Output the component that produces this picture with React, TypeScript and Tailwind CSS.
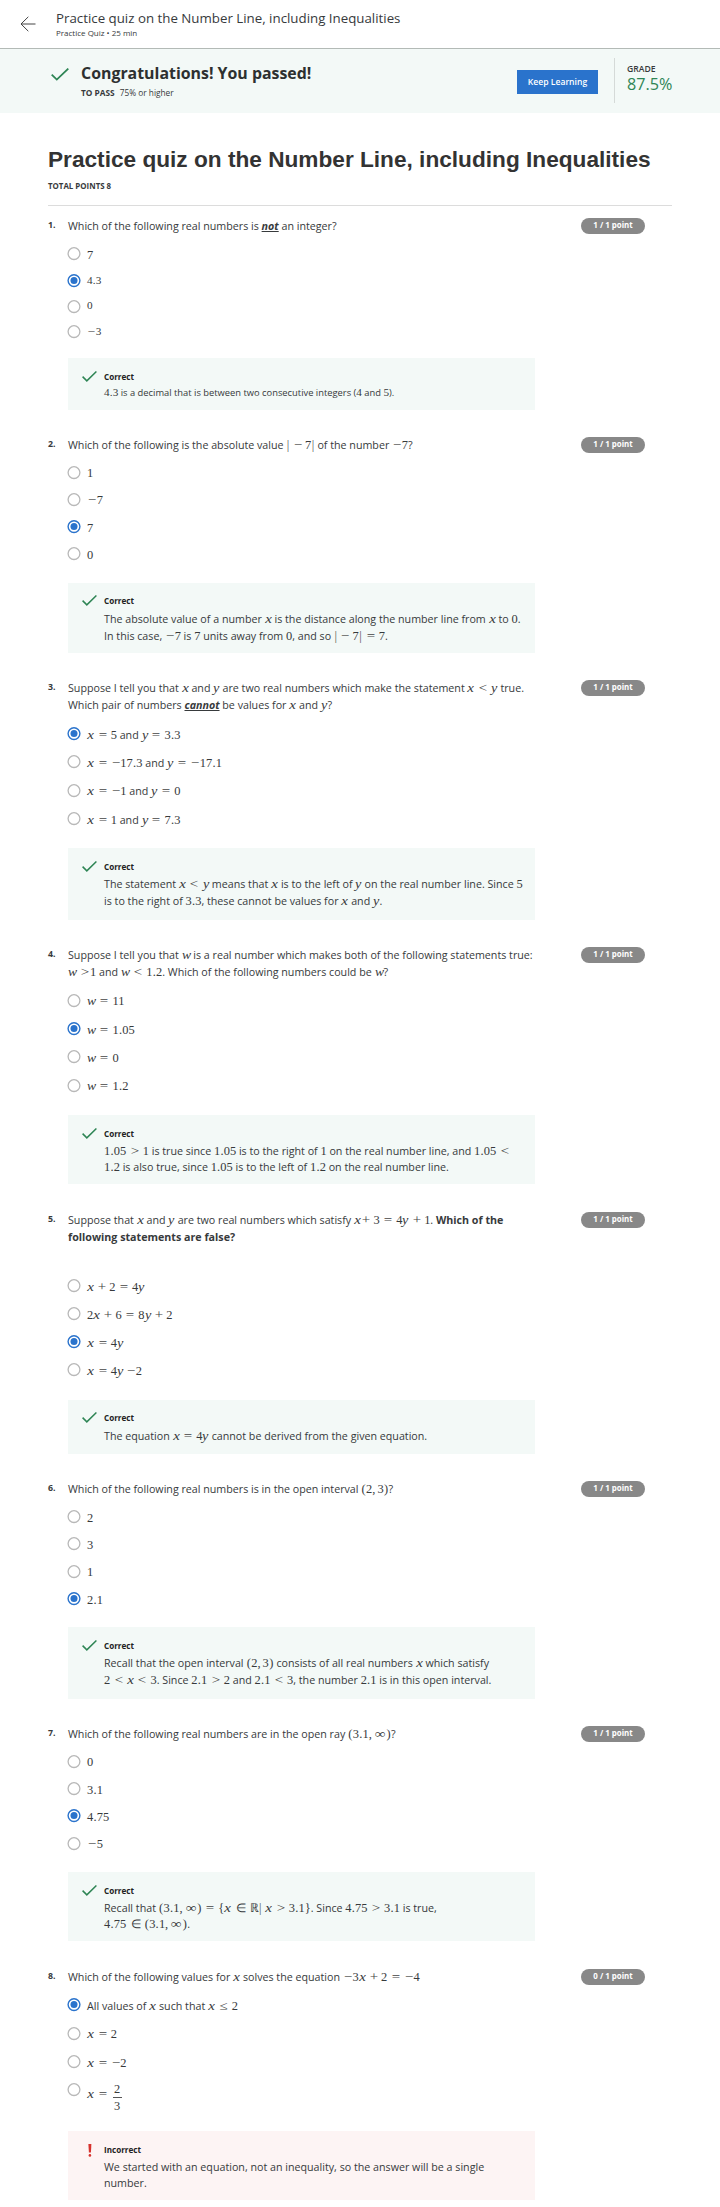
import React from "react";

/* Typesets a short formula: variables in italics, relations and signs on wider advances. */
function M({ children }: { children: string }) {
  const s = children;
  const out: React.ReactNode[] = [];
  for (let i = 0; i < s.length; i++) {
    const c = s[i];
    if (c === " ") continue;
    const post = s[i + 1] === " ";
    const unary = !post && "=<>".includes(s[i - 2] ?? " ");
    const pre = s[i - 1] === " " && !unary;
    if (c === "∈") {
      out.push(<span key={i} className="mx-[0.36em] inline-block w-[0.75em] text-center">∈</span>);
    } else if ("=<>≤+−".includes(c)) {
      const rel = !"+−".includes(c);
      const ml = pre ? (rel ? "ml-[0.278em]" : "ml-[0.222em]") : "";
      const mr = post ? (rel ? "mr-[0.278em]" : "mr-[0.222em]") : "";
      out.push(
        <span key={i} className={`inline-block w-[0.778em] scale-x-[1.2] text-center text-[#444] ${ml} ${mr}`}>{c}</span>
      );
    } else if (/[xyw]/.test(c)) {
      const w = c === "w" ? "w-[0.716em] scale-x-[1.1]" : c === "y" ? "w-[0.52em] scale-x-[1.15]" : "w-[0.572em] scale-x-[1.2]";
      out.push(<span key={i} className={`inline-block text-center italic ${w}`}>{c}</span>);
    } else if (c === "|") {
      const gap = i > 0 && post && s[i + 2] !== "=" ? "mr-[0.25em]" : "";
      out.push(<span key={i} className={`inline-block w-[0.278em] text-center text-[#555] ${gap}`}>|</span>);
    } else if (c === "∞") {
      out.push(<span key={i} className="inline-block w-[0.98em] scale-x-[1.2] text-center">∞</span>);
    } else if (c === "(" || c === ")") {
      out.push(<span key={i} className="inline-block w-[0.389em] text-center">{c}</span>);
    } else if (c === ",") {
      out.push(<span key={i} className="mr-[0.17em]">,</span>);
    } else {
      out.push(<span key={i} className={c === "." ? "inline-block w-[0.278em] text-center" : ""}>{c}</span>);
    }
  }
  return (
    <span className="inline-block whitespace-nowrap font-['Liberation_Serif',serif] text-[12.45px] leading-none">{out}</span>
  );
}

function Small({ children }: { children: React.ReactNode }) {
  return <span className="text-[9.35px] [&>span]:text-[11.2px]">{children}</span>;
}

function Check({ className }: { className: string }) {
  return (
    <svg viewBox="0 0 18 13" className={className} fill="none" stroke="#2e8555" strokeWidth="1.8" preserveAspectRatio="none">
      <path d="M0.7 6.6 L5.8 11.6 L17.3 0.6" />
    </svg>
  );
}

function Radio({ on }: { on: boolean }) {
  return on ? (
    <svg viewBox="0 0 14 14" className="-ml-[1px] size-[14px] shrink-0">
      <circle cx="7" cy="6.6" r="5.9" fill="#fff" stroke="#2a73cc" strokeWidth="1.4" />
      <circle cx="7" cy="6.6" r="3.5" fill="#2a73cc" />
    </svg>
  ) : (
    <svg viewBox="0 0 14 14" className="-ml-[1px] size-[14px] shrink-0">
      <circle cx="7" cy="6.6" r="5.9" fill="#fff" stroke="#b8b8b8" strokeWidth="1.3" />
    </svg>
  );
}

type Option = { h: number; base: number; body: React.ReactNode };
type Question = {
  height: number;
  points: string;
  stem: React.ReactNode[];
  gap: number;
  options: Option[];
  selected: number;
  boxHeight: number;
  labelBase: number;
  textBase: number;
  lead: number;
  wrong?: boolean;
  feedback: React.ReactNode[];
};

const questions: Question[] = [
  {
    height: 219, points: "1 / 1 point",
    stem: [<>Which of the following real numbers is <b className="italic underline">not</b> an integer?</>],
    gap: 12, selected: 1,
    options: [
      { h: 27, base: 12, body: <M>7</M> },
      { h: 26, base: 10, body: <Small><M>4.3</M></Small> },
      { h: 25, base: 9, body: <Small><M>0</M></Small> },
      { h: 33, base: 10, body: <Small><M>−3</M></Small> },
    ],
    boxHeight: 52, labelBase: 22, textBase: 38, lead: 17,
    feedback: [<Small><M>4.3</M> is a decimal that is between two consecutive integers (<M>4</M> and <M>5</M>).</Small>],
  },
  {
    height: 243, points: "1 / 1 point",
    stem: [<>Which of the following is the absolute value <M>| − 7|</M> of the number <M>−7</M>?</>],
    gap: 12, selected: 2,
    options: [
      { h: 27, base: 11, body: <M>1</M> },
      { h: 27, base: 11, body: <M>−7</M> },
      { h: 27, base: 12, body: <M>7</M> },
      { h: 36, base: 12, body: <M>0</M> },
    ],
    boxHeight: 70, labelBase: 21, textBase: 40, lead: 17,
    feedback: [
      <>The absolute value of a number <M>x</M> is the distance along the number line from <M>x</M> to <M>0</M>.</>,
      <>In this case, <M>−7</M> is <M>7</M> units away from <M>0</M>, and so <M>| − 7| = 7</M>.</>,
    ],
  },
  {
    height: 267, points: "1 / 1 point",
    stem: [
      <>Suppose I tell you that <M>x</M> and <M>y</M> are two real numbers which make the statement <M>{"x < y"}</M> true.</>,
      <>Which pair of numbers <b className="italic underline">cannot</b> be values for <M>x</M> and <M>y</M>?</>,
    ],
    gap: 13, selected: 0,
    options: [
      { h: 28, base: 12, body: <><M>x = 5</M> and <M>y = 3.3</M></> },
      { h: 29, base: 12, body: <><M>x = −17.3</M> and <M>y = −17.1</M></> },
      { h: 28, base: 11, body: <><M>x = −1</M> and <M>y = 0</M></> },
      { h: 36, base: 12, body: <><M>x = 1</M> and <M>y = 7.3</M></> },
    ],
    boxHeight: 72, labelBase: 22, textBase: 40, lead: 17,
    feedback: [
      <>The statement <M>{"x < y"}</M> means that <M>x</M> is to the left of <M>y</M> on the real number line. Since <M>5</M></>,
      <>is to the right of <M>3.3</M>, these cannot be values for <M>x</M> and <M>y</M>.</>,
    ],
  },
  {
    height: 265, points: "1 / 1 point",
    stem: [
      <>Suppose I tell you that <M>w</M> is a real number which makes both of the following statements true:</>,
      <><M>{"w >1"}</M> and <M>{"w < 1.2"}</M>. Which of the following numbers could be <M>w</M>?</>,
    ],
    gap: 13, selected: 1,
    options: [
      { h: 28, base: 11, body: <M>w = 11</M> },
      { h: 28, base: 12, body: <M>w = 1.05</M> },
      { h: 29, base: 12, body: <M>w = 0</M> },
      { h: 36, base: 11, body: <M>w = 1.2</M> },
    ],
    boxHeight: 69, labelBase: 22, textBase: 40, lead: 16,
    feedback: [
      <><M>{"1.05 > 1"}</M> is true since <M>1.05</M> is to the right of <M>1</M> on the real number line, and <M>{"1.05 <"}</M></>,
      <><M>1.2</M> is also true, since <M>1.05</M> is to the left of <M>1.2</M> on the real number line.</>,
    ],
  },
  {
    height: 269, points: "1 / 1 point",
    stem: [
      <>Suppose that <M>x</M> and <M>y</M> are two real numbers which satisfy <M>x+ 3 = 4y + 1</M>. <b>Which of the</b></>,
      <b>following statements are false?</b>,
    ],
    gap: 33, selected: 2,
    options: [
      { h: 28, base: 12, body: <M>x + 2 = 4y</M> },
      { h: 28, base: 12, body: <M>2x + 6 = 8y + 2</M> },
      { h: 28, base: 12, body: <M>x = 4y</M> },
      { h: 37, base: 12, body: <M>x = 4y −2</M> },
    ],
    boxHeight: 54, labelBase: 21, textBase: 40, lead: 17,
    feedback: [<>The equation <M>x = 4y</M> cannot be derived from the given equation.</>],
  },
  {
    height: 245, points: "1 / 1 point",
    stem: [<>Which of the following real numbers is in the open interval <M>(2, 3)</M>?</>],
    gap: 12, selected: 3,
    options: [
      { h: 27, base: 12, body: <M>2</M> },
      { h: 28, base: 12, body: <M>3</M> },
      { h: 27, base: 11, body: <M>1</M> },
      { h: 35, base: 12, body: <M>2.1</M> },
    ],
    boxHeight: 72, labelBase: 22, textBase: 40, lead: 17,
    feedback: [
      <>Recall that the open interval <M>(2, 3)</M> consists of all real numbers <M>x</M> which satisfy</>,
      <><M>{"2 < x < 3"}</M>. Since <M>{"2.1 > 2"}</M> and <M>{"2.1 < 3"}</M>, the number <M>2.1</M> is in this open interval.</>,
    ],
  },
  {
    height: 243, points: "1 / 1 point",
    stem: [<>Which of the following real numbers are in the open ray <M>(3.1, ∞)</M>?</>],
    gap: 12, selected: 2,
    options: [
      { h: 27, base: 11, body: <M>0</M> },
      { h: 27, base: 12, body: <M>3.1</M> },
      { h: 28, base: 12, body: <M>4.75</M> },
      { h: 35, base: 11, body: <M>−5</M> },
    ],
    boxHeight: 69, labelBase: 22, textBase: 40, lead: 16,
    feedback: [
      <>Recall that <M>{"(3.1, ∞) = {x ∈ ℝ| x > 3.1}"}</M>. Since <M>{"4.75 > 3.1"}</M> is true,</>,
      <><M>4.75 ∈ (3.1, ∞)</M>.</>,
    ],
  },
  {
    height: 238, points: "0 / 1 point",
    stem: [<>Which of the following values for <M>x</M> solves the equation <M>−3x + 2 = −4</M></>],
    gap: 12, selected: 0,
    options: [
      { h: 29, base: 12, body: <>All values of <M>x</M> such that <M>x ≤ 2</M></> },
      { h: 28, base: 11, body: <M>x = 2</M> },
      { h: 28, base: 12, body: <M>x = −2</M> },
      {
        h: 48, base: 17,
        body: (
          <span className="flex items-start">
            <M>x = </M>
            <span className="-mt-[7px] ml-[2px] flex w-[9px] flex-col items-center font-['Liberation_Serif',serif] text-[12.4px]">
              <span className="leading-[16px]">2</span>
              <span className="h-px w-full bg-[#555]" />
              <span className="leading-[17px]">3</span>
            </span>
          </span>
        ),
      },
    ],
    boxHeight: 69, labelBase: 22, textBase: 40, lead: 16, wrong: true,
    feedback: [<>We started with an equation, not an inequality, so the answer will be a single</>, <>number.</>],
  },
];

function Feedback({ q }: { q: Question }) {
  return (
    <div
      className={`flex w-[467px] pl-[14px] ${q.wrong ? "bg-[#fdf4f4]" : "bg-[#f3f9f7]"}`}
      style={{ height: q.boxHeight }}
    >
      <div className="w-[22px] shrink-0" style={{ paddingTop: q.labelBase - 9 }}>
        {q.wrong ? (
          <svg viewBox="0 0 4 13" className="ml-[5.5px] h-[13px] w-[4px]" fill="#d6322d">
            <path d="M0.4 0H3.4L2.9 8.6H0.9Z" />
            <circle cx="1.9" cy="11.4" r="1.3" />
          </svg>
        ) : (
          <Check className="h-[11px] w-[15px]" />
        )}
      </div>
      <div>
        <div
          className="h-[12px] text-[8.1px] font-bold leading-[12px] text-[#222]"
          style={{ marginTop: q.labelBase - 9, marginBottom: q.textBase - q.labelBase - 3 - q.lead / 2 - 4 }}
        >
          {q.wrong ? "Incorrect" : "Correct"}
        </div>
        {q.feedback.map((line, i) => (
          <div key={i} className="whitespace-nowrap" style={{ height: q.lead, lineHeight: `${q.lead}px` }}>
            {line}
          </div>
        ))}
      </div>
    </div>
  );
}

function QuestionBlock({ q, n }: { q: Question; n: number }) {
  return (
    <section className="flex items-start" style={{ height: q.height }}>
      <div className="w-[20px] shrink-0 text-[8.8px] font-bold leading-[14px]">{n}.</div>
      <div className="w-[513px] shrink-0">
        {q.stem.map((line, i) => (
          <div key={i} className="h-[17px] whitespace-nowrap leading-[17px]">{line}</div>
        ))}
        <div style={{ paddingTop: q.gap }}>
          {q.options.map((o, i) => (
            <div key={i} className="flex items-start" style={{ height: o.h }}>
              <Radio on={i === q.selected} />
              <div className="ml-[6px] whitespace-nowrap leading-[16px]" style={{ marginTop: o.base - 12 }}>
                {o.body}
              </div>
            </div>
          ))}
        </div>
        <Feedback q={q} />
      </div>
      <div className="flex h-[16px] w-[64px] items-center justify-center rounded-full bg-[#888] text-[7.9px] font-bold text-white">
        {q.points}
      </div>
    </section>
  );
}

export default function App() {
  return (
    <div className="h-[2207px] w-[720px] overflow-hidden bg-white font-['Open_Sans',sans-serif] text-[10.7px] text-[#373a3c]">
      <header className="flex h-[49px] items-start border-b border-[#b3bab6]">
        <svg viewBox="0 0 16 16" className="ml-[20px] mt-[16px] size-[16px]" fill="none" stroke="#444" strokeWidth="1">
          <path d="M15.5 8H1M8.3 0.8L1 8L8.3 15.2" />
        </svg>
        <div className="ml-[20px] mt-[9px] whitespace-nowrap">
          <div className="text-[13.3px] leading-[19px]">Practice quiz on the Number Line, including Inequalities</div>
          <div className="text-[8px] leading-[9px]">Practice Quiz • 25 min</div>
        </div>
      </header>
      <div className="flex h-[64px] items-start bg-[#f3f9f7]">
        <Check className="ml-[51px] mt-[19px] h-[13px] w-[18px]" />
        <div className="ml-[12px] mt-[13px] w-[436px] whitespace-nowrap">
          <div className="text-[15.9px] font-bold leading-[22px] text-[#2d3030]">Congratulations! You passed!</div>
          <div className="mt-[3px] text-[8.3px] leading-[12px]"><b className="mr-[3px]">TO PASS</b> 75% or higher</div>
        </div>
        <button className="mt-[21px] h-[24px] w-[81px] bg-[#2a73cc] text-[8.6px] font-semibold text-white">Keep Learning</button>
        <div className="ml-[16px] mt-[9px] h-[45px] border-l border-[#d5dad8] pl-[12px] pt-[5px]">
          <div className="text-[8.6px] font-semibold leading-[12px]">GRADE</div>
          <div className="text-[16.2px] leading-[18px] text-[#2e8555]">87.5%</div>
        </div>
      </div>
      <main className="px-[48px]">
        <h1 className="mt-[32px] whitespace-nowrap font-['Liberation_Sans',sans-serif] text-[22.65px] font-bold leading-[28px] text-[#333]">
          Practice quiz on the Number Line, including Inequalities
        </h1>
        <div className="mt-[7px] text-[7.9px] font-bold leading-[12px]">TOTAL POINTS 8</div>
        <div className="mb-[12px] mt-[13px] h-px bg-[#dcdcdc]" />
        {questions.map((q, i) => (
          <QuestionBlock key={i} q={q} n={i + 1} />
        ))}
      </main>
    </div>
  );
}
